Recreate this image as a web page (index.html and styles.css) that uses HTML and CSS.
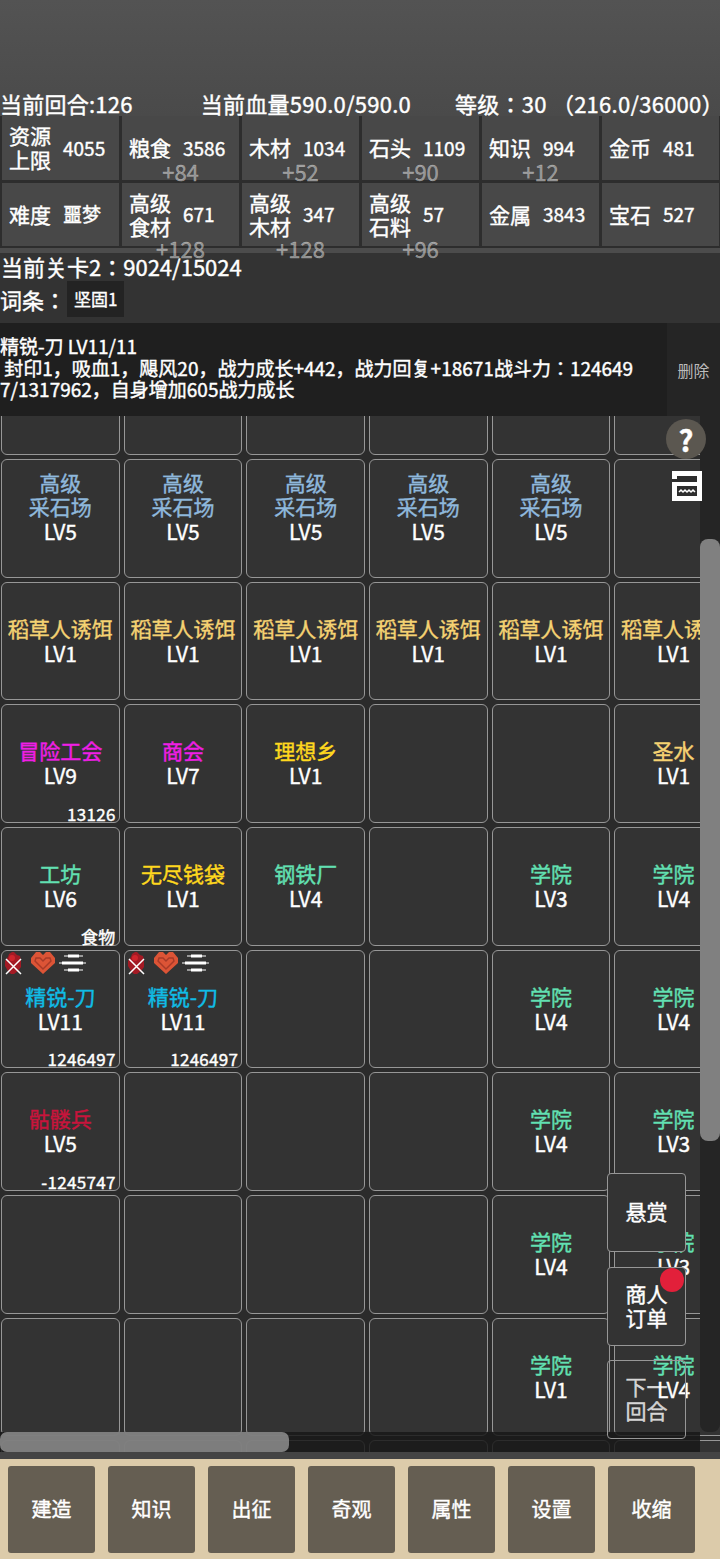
FILE: index.html
```html
<!DOCTYPE html>
<html>
<head>
    <title>回合</title>
    <link rel="stylesheet" href="styles.css">
</head>
<body>
    <div class="status">
        <span class="status-turn">当前回合:126</span>
        <span class="status-hp">当前血量590.0/590.0</span>
        <span class="status-level">等级：30 （216.0/36000）</span>
    </div>

    <div class="res-grid">
        <div class="res"><span class="res-name">资源上限</span><span class="res-val">4055</span></div>
        <div class="res"><span class="res-name">粮食</span><span class="res-val">3586</span><span class="res-add res-add-up">+84</span></div>
        <div class="res"><span class="res-name">木材</span><span class="res-val">1034</span><span class="res-add res-add-up">+52</span></div>
        <div class="res"><span class="res-name">石头</span><span class="res-val">1109</span><span class="res-add res-add-up">+90</span></div>
        <div class="res"><span class="res-name">知识</span><span class="res-val">994</span><span class="res-add res-add-up">+12</span></div>
        <div class="res"><span class="res-name">金币</span><span class="res-val">481</span></div>
        <div class="res"><span class="res-name">难度</span><span class="res-val">噩梦</span></div>
        <div class="res"><span class="res-name">高级食材</span><span class="res-val">671</span><span class="res-add">+128</span></div>
        <div class="res"><span class="res-name">高级木材</span><span class="res-val">347</span><span class="res-add">+128</span></div>
        <div class="res"><span class="res-name">高级石料</span><span class="res-val">57</span><span class="res-add">+96</span></div>
        <div class="res"><span class="res-name">金属</span><span class="res-val">3843</span></div>
        <div class="res"><span class="res-name">宝石</span><span class="res-val">527</span></div>
    </div>

    <div class="stage">当前关卡2：9024/15024</div>
    <div class="traits">词条：<span class="trait">坚固1</span></div>

    <div class="detail">
        <div class="detail-text">精锐-刀 LV11/11<br>&nbsp;封印1，吸血1，飓风20，战力成长+442，战力回复+18671战斗力：124649<br>7/1317962，自身增加605战力成长</div>
        <div class="detail-del">删除</div>
    </div>

    <div class="board">
        <div class="board-grid">
            <div class="cell"></div><div class="cell"></div><div class="cell"></div><div class="cell"></div><div class="cell"></div><div class="cell"></div>

            <div class="cell cell-tall"><span class="c-stone">高级<br>采石场</span><br>LV5</div>
            <div class="cell cell-tall"><span class="c-stone">高级<br>采石场</span><br>LV5</div>
            <div class="cell cell-tall"><span class="c-stone">高级<br>采石场</span><br>LV5</div>
            <div class="cell cell-tall"><span class="c-stone">高级<br>采石场</span><br>LV5</div>
            <div class="cell cell-tall"><span class="c-stone">高级<br>采石场</span><br>LV5</div>
            <div class="cell"></div>

            <div class="cell"><span class="c-bait">稻草人诱饵</span><br>LV1</div>
            <div class="cell"><span class="c-bait">稻草人诱饵</span><br>LV1</div>
            <div class="cell"><span class="c-bait">稻草人诱饵</span><br>LV1</div>
            <div class="cell"><span class="c-bait">稻草人诱饵</span><br>LV1</div>
            <div class="cell"><span class="c-bait">稻草人诱饵</span><br>LV1</div>
            <div class="cell"><span class="c-bait">稻草人诱饵</span><br>LV1</div>

            <div class="cell"><span class="c-magenta">冒险工会</span><br>LV9<span class="cell-num">13126</span></div>
            <div class="cell"><span class="c-magenta">商会</span><br>LV7</div>
            <div class="cell"><span class="c-gold">理想乡</span><br>LV1</div>
            <div class="cell"></div>
            <div class="cell"></div>
            <div class="cell"><span class="c-bait">圣水</span><br>LV1</div>

            <div class="cell"><span class="c-green">工坊</span><br>LV6<span class="cell-num">食物</span></div>
            <div class="cell"><span class="c-gold">无尽钱袋</span><br>LV1</div>
            <div class="cell"><span class="c-green">钢铁厂</span><br>LV4</div>
            <div class="cell"></div>
            <div class="cell"><span class="c-green">学院</span><br>LV3</div>
            <div class="cell"><span class="c-green">学院</span><br>LV4</div>

            <div class="cell">
                <svg class="buffs" width="88" height="26" viewBox="0 0 88 26">
                    <path d="M4 10l3-4 1-3 3-2h2l3 3 3 1 1 5v6l-3 4-4 3h-3l-3-3-3-5z" fill="#a31a24"/>
                    <circle cx="11" cy="7" r="3" fill="#d0242c"/>
                    <path d="M5 23L20 8M5 8l15 15" stroke="#fff" stroke-width="1.5" fill="none"/>
                    <path d="M30 7L35 1H39L42 4L45 1H49L54 7V12L42 23L30 12Z" fill="#dc5436"/>
                    <path d="M35 7h4l3 3 3-3h4l1 3-8 8-8-8z" fill="none" stroke="#a83a28" stroke-width="1.4"/>
                    <g stroke="#fff" fill="none">
                        <path d="M63 5h19" stroke-width="1"/><path d="M67 5h11" stroke-width="3"/>
                        <path d="M58 12h27" stroke-width="1"/><path d="M61 12h21" stroke-width="3"/>
                        <path d="M63 19h19" stroke-width="1"/><path d="M67 19h11" stroke-width="3"/>
                    </g>
                </svg>
                <span class="c-blue">精锐-刀</span><br>LV11<span class="cell-num">1246497</span>
            </div>
            <div class="cell">
                <svg class="buffs" width="88" height="26" viewBox="0 0 88 26">
                    <path d="M4 10l3-4 1-3 3-2h2l3 3 3 1 1 5v6l-3 4-4 3h-3l-3-3-3-5z" fill="#a31a24"/>
                    <circle cx="11" cy="7" r="3" fill="#d0242c"/>
                    <path d="M5 23L20 8M5 8l15 15" stroke="#fff" stroke-width="1.5" fill="none"/>
                    <path d="M30 7L35 1H39L42 4L45 1H49L54 7V12L42 23L30 12Z" fill="#dc5436"/>
                    <path d="M35 7h4l3 3 3-3h4l1 3-8 8-8-8z" fill="none" stroke="#a83a28" stroke-width="1.4"/>
                    <g stroke="#fff" fill="none">
                        <path d="M63 5h19" stroke-width="1"/><path d="M67 5h11" stroke-width="3"/>
                        <path d="M58 12h27" stroke-width="1"/><path d="M61 12h21" stroke-width="3"/>
                        <path d="M63 19h19" stroke-width="1"/><path d="M67 19h11" stroke-width="3"/>
                    </g>
                </svg>
                <span class="c-blue">精锐-刀</span><br>LV11<span class="cell-num">1246497</span>
            </div>
            <div class="cell"></div>
            <div class="cell"></div>
            <div class="cell"><span class="c-green">学院</span><br>LV4</div>
            <div class="cell"><span class="c-green">学院</span><br>LV4</div>

            <div class="cell"><span class="c-red">骷髅兵</span><br>LV5<span class="cell-num">-1245747</span></div>
            <div class="cell"></div>
            <div class="cell"></div>
            <div class="cell"></div>
            <div class="cell"><span class="c-green">学院</span><br>LV4</div>
            <div class="cell"><span class="c-green">学院</span><br>LV3</div>

            <div class="cell"></div>
            <div class="cell"></div>
            <div class="cell"></div>
            <div class="cell"></div>
            <div class="cell"><span class="c-green">学院</span><br>LV4</div>
            <div class="cell"><span class="c-green">学院</span><br>LV3</div>

            <div class="cell"></div>
            <div class="cell"></div>
            <div class="cell"></div>
            <div class="cell"></div>
            <div class="cell"><span class="c-green">学院</span><br>LV1</div>
            <div class="cell"><span class="c-green">学院</span><br>LV4</div>

            <div class="cell"></div><div class="cell"></div><div class="cell"></div><div class="cell"></div><div class="cell"></div><div class="cell"></div>
        </div>

        <div class="vbar"><div class="vbar-thumb"></div></div>
        <div class="hbar"><div class="hbar-thumb"></div></div>

        <div class="help">?</div>
        <svg class="shop-icon" width="30" height="30" viewBox="0 0 30 30">
            <rect width="30" height="30" fill="#fff"/>
            <path d="M5 5h20v6H5zM0 8h5v3H0z" fill="#2e2e2e"/>
            <rect x="5" y="15" width="20" height="10" fill="#2e2e2e"/>
            <path d="M7 21l2-2 2 2 2-2 2 2 2-2 2 2 2-2 2 2" stroke="#fff" stroke-width="1.5" fill="none"/>
        </svg>

        <div class="float-btns">
            <div class="float-btn">悬赏</div>
            <div class="float-btn">商人<br>订单<span class="dot"></span></div>
            <div class="float-btn float-ghost">下一<br>回合</div>
        </div>
    </div>

    <div class="strip"></div>
    <div class="nav">
        <div class="nav-btn">建造</div>
        <div class="nav-btn">知识</div>
        <div class="nav-btn">出征</div>
        <div class="nav-btn">奇观</div>
        <div class="nav-btn">属性</div>
        <div class="nav-btn">设置</div>
        <div class="nav-btn">收缩</div>
    </div>
</body>
</html>
```

FILE: styles.css
```css
* {
    box-sizing: border-box;
}
html, body {
    margin: 0;
    padding: 0;
}
body {
    width: 720px;
    height: 1559px;
    overflow: hidden;
    background: #333;
    color: #fff;
    font-family: "Noto Sans CJK JP", "Noto Sans", sans-serif;
    -webkit-text-stroke: 0.4px currentColor;
}

/* top status */
.status {
    display: flex;
    height: 116px;
    padding-top: 91px;
    font-size: 22px;
    line-height: 25px;
    letter-spacing: 0.25px;
    white-space: nowrap;
    background: linear-gradient(#535353, #4a4a4a);
}
.status-hp {
    margin-left: 68px;
}
.status-level {
    margin-left: 44px;
}

/* resources */
.res-grid {
    display: grid;
    grid-template-columns: repeat(6, 117px);
    grid-template-rows: 64px 63px;
    gap: 3px;
    padding: 0 0 2px 2px;
    height: 137px;
    background: #2d2d2d;
    border-bottom: 5px solid #4c4c4c;
}
.res {
    position: relative;
    display: flex;
    align-items: center;
    gap: 12px;
    padding: 0 0 2px 7px;
    background: #484848;
}
.res-name {
    width: 42px;
    font-size: 21px;
    line-height: 24px;
}
.res-val {
    font-size: 19px;
}
.res-add {
    position: absolute;
    left: 0;
    right: 0;
    bottom: -14px;
    text-align: center;
    font-size: 22px;
    line-height: 24px;
    color: rgba(255,255,255,0.42);
    z-index: 2;
}
.res-add-up {
    bottom: -3px;
}

.stage {
    height: 28px;
    padding-left: 1px;
    font-size: 22px;
    line-height: 26px;
}
.traits {
    display: flex;
    align-items: center;
    height: 36px;
    font-size: 22px;
    line-height: 30px;
    white-space: nowrap;
}
.trait {
    display: inline-block;
    margin-left: 1px;
    padding: 0 7px;
    height: 36px;
    line-height: 36px;
    font-size: 17px;
    background: #232323;
}

/* selected unit */
.detail {
    display: flex;
    height: 93px;
    margin-top: 6px;
    background: #1f1f1f;
}
.detail-text {
    width: 667px;
    padding-top: 12px;
    font-size: 19px;
    line-height: 21.5px;
    white-space: nowrap;
    overflow: hidden;
}
.detail-del {
    flex: 1;
    display: flex;
    align-items: center;
    justify-content: center;
    font-size: 16px;
    -webkit-text-stroke: 0;
    color: #bbb;
    background: #252525;
}

/* map */
.board {
    position: relative;
    height: 1036px;
    overflow: hidden;
    background: #2b2b2b;
}
.board-grid {
    display: grid;
    grid-template-columns: repeat(6, 118.67px);
    grid-auto-rows: 118.67px;
    gap: 4px;
    width: 736px;
    margin-top: -79.7px;
    margin-left: 1px;
}
.cell {
    position: relative;
    padding-top: 33px;
    border: 1px solid #979797;
    border-radius: 6px;
    background: #333;
    text-align: center;
    font-size: 21px;
    line-height: 25px;
    white-space: nowrap;
}
.cell-tall {
    padding-top: 10px;
    line-height: 24.5px;
}
.cell-num {
    position: absolute;
    right: 3px;
    bottom: -3px;
    font-size: 17px;
    line-height: 22px;
    letter-spacing: 0.3px;
}
.buffs {
    position: absolute;
    left: -1px;
    top: 0;
}
.c-stone { color: #8fb8dc; }
.c-bait { color: #f5d272; }
.c-magenta { color: #f01ee6; }
.c-gold { color: #ffd81e; }
.c-green { color: #62e0b2; }
.c-blue { color: #10bce6; }
.c-red { color: #c8143c; }

.vbar {
    position: absolute;
    right: 0;
    top: 0;
    bottom: 20px;
    width: 20px;
    background: #252525;
    border-radius: 0 0 8px 8px;
}
.vbar-thumb {
    position: absolute;
    top: 123px;
    width: 20px;
    height: 602px;
    background: #808080;
    border-radius: 8px;
}
.hbar {
    position: absolute;
    left: 0;
    right: 20px;
    bottom: 0;
    height: 20px;
    background: rgba(25,25,25,0.85);
}
.hbar-thumb {
    width: 289px;
    height: 20px;
    background: rgba(150,150,150,0.8);
    border-radius: 7px;
}

.help {
    position: absolute;
    left: 666px;
    top: 3px;
    width: 40px;
    height: 40px;
    border-radius: 50%;
    background: #5b5750;
    text-align: center;
    font-size: 29px;
    line-height: 40px;
    font-weight: 700;
}
.shop-icon {
    position: absolute;
    left: 672px;
    top: 55px;
}

.float-btns {
    position: absolute;
    left: 607px;
    top: 757px;
    display: flex;
    flex-direction: column;
    gap: 14.5px;
}
.float-btn {
    position: relative;
    display: flex;
    align-items: center;
    justify-content: center;
    width: 79px;
    height: 79px;
    padding-bottom: 3px;
    border: 1px solid #979797;
    border-radius: 4px;
    background: #333;
    text-align: center;
    font-size: 21px;
    line-height: 24px;
}
.float-ghost {
    background: transparent;
    color: rgba(255,255,255,0.75);
}
.dot {
    position: absolute;
    right: 1px;
    top: 0;
    width: 24px;
    height: 24px;
    border-radius: 50%;
    background: #e2203a;
    -webkit-text-stroke: 0;
}

/* bottom nav */
.strip {
    height: 7px;
    background: #444;
}
.nav {
    display: flex;
    gap: 13px;
    height: 100px;
    padding: 7px 8px 0;
    background: #dccbaa;
}
.nav-btn {
    display: flex;
    align-items: center;
    justify-content: center;
    width: 87px;
    height: 87px;
    padding-bottom: 2px;
    border-radius: 3px;
    background: #655e52;
    font-size: 20px;
}
```
